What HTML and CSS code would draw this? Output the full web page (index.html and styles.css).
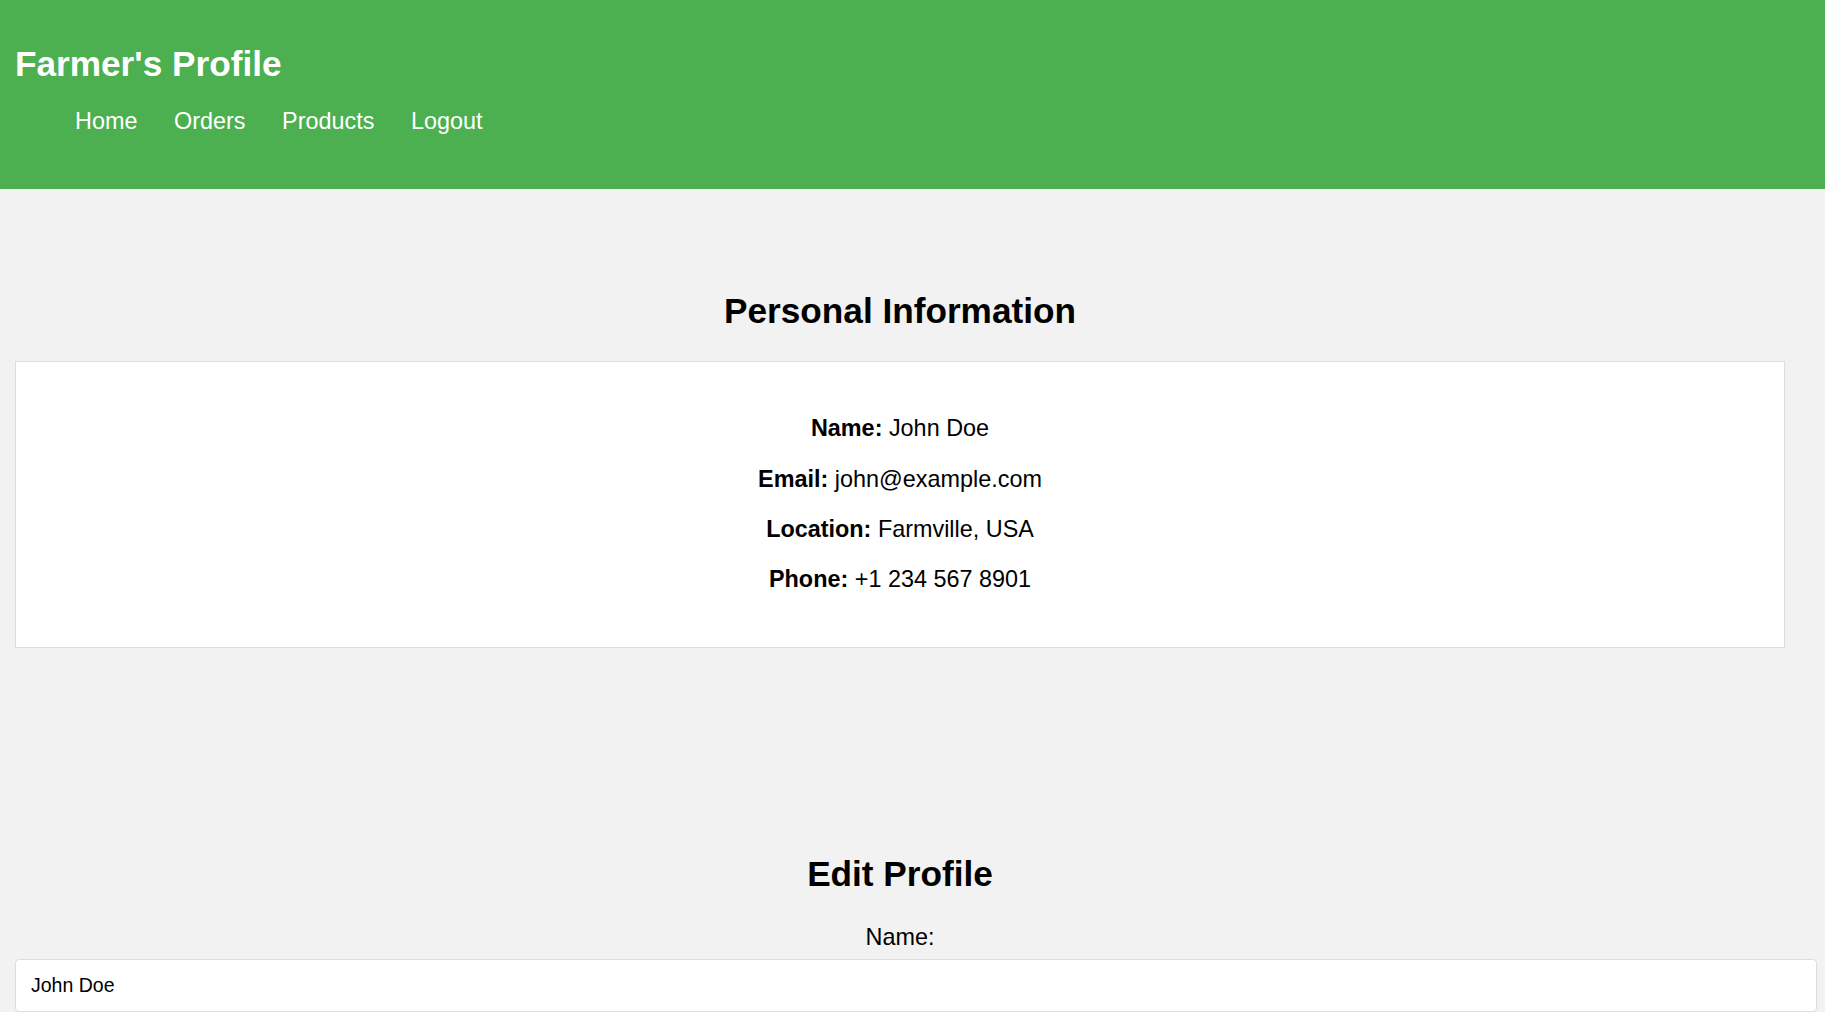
FILE: index.html
```html
<!DOCTYPE html>
<html lang="en">
<head>
<meta charset="utf-8">
<title>Farmer's Profile</title>
<link rel="stylesheet" href="styles.css">
</head>
<body>
<header class="site-header">
  <h1 class="site-title">Farmer's Profile</h1>
  <nav>
    <ul class="nav-list">
      <li><a class="nav-link" href="#">Home</a></li>
      <li><a class="nav-link" href="#">Orders</a></li>
      <li><a class="nav-link" href="#">Products</a></li>
      <li><a class="nav-link" href="#">Logout</a></li>
    </ul>
  </nav>
</header>
<main class="content">
  <section class="info-section">
    <h2 class="section-title">Personal Information</h2>
    <div class="info-card">
      <p class="info-line"><strong>Name:</strong> John Doe</p>
      <p class="info-line"><strong>Email:</strong> john@example.com</p>
      <p class="info-line"><strong>Location:</strong> Farmville, USA</p>
      <p class="info-line"><strong>Phone:</strong> +1 234 567 8901</p>
    </div>
  </section>
  <section class="edit-section">
    <h2 class="section-title">Edit Profile</h2>
    <form class="edit-form">
      <label class="field-label" for="name">Name:</label>
      <input class="field-input" type="text" id="name" value="John Doe">
      <label class="field-label" for="email">Email:</label>
      <input class="field-input" type="email" id="email" value="john@example.com">
      <label class="field-label" for="location">Location:</label>
      <input class="field-input" type="text" id="location" value="Farmville, USA">
      <label class="field-label" for="phone">Phone:</label>
      <input class="field-input" type="text" id="phone" value="+1 234 567 8901">
      <button class="save-button" type="submit">Update Profile</button>
    </form>
  </section>
</main>
</body>
</html>
```
FILE: styles.css
```css
html, body {
  margin: 0;
  padding: 0;
}

html::-webkit-scrollbar {
  width: 11px;
  height: 10px;
  background: #fafafa;
}

html::-webkit-scrollbar-track {
  background: #fafafa;
}

html::-webkit-scrollbar-thumb {
  background: #8a8a8a;
  border-radius: 5px;
  border: 1px solid #fafafa;
}

html::-webkit-scrollbar-corner {
  background: #fafafa;
}

body {
  background: #f2f2f2;
  color: #000;
  font-family: "Liberation Sans", Arial, sans-serif;
}

.site-header {
  background: #4caf50;
  color: #fff;
  padding: 44.2px 15px 53.4px;
}

.site-title {
  margin: 0;
  font-size: 35.2px;
  line-height: 40.5px;
  font-weight: bold;
}

.nav-list {
  list-style: none;
  margin: 23.6px 0 0;
  padding: 0 0 0 60px;
  display: flex;
  gap: 36.6px;
  font-size: 23.4px;
  line-height: 26.9px;
}

.nav-link {
  color: #fff;
  text-decoration: none;
}

.content {
  width: 1770px;
  padding: 102.9px 0 40px 15px;
}

.section-title {
  margin: 0 0 29px;
  font-size: 35.2px;
  line-height: 40.5px;
  text-align: center;
  font-weight: bold;
}

.info-card {
  background: #fff;
  border: 1px solid #ddd;
  padding: 30px;
  text-align: center;
  font-size: 23.4px;
  line-height: 26.9px;
}

.info-line {
  margin: 23.4px 0;
}

.edit-section {
  margin-top: 206.6px;
}

.edit-form {
  display: flex;
  flex-direction: column;
}

.field-label {
  display: block;
  text-align: center;
  font-size: 23.4px;
  line-height: 26.9px;
  margin-bottom: 8.2px;
}

.field-input {
  width: 100%;
  padding: 14px 15px;
  border: 1px solid #ddd;
  border-radius: 4px;
  background: #fff;
  font-family: "Liberation Sans", Arial, sans-serif;
  font-size: 19.5px;
  color: #000;
  margin: 0 0 20px;
}

.save-button {
  align-self: center;
  background: #4caf50;
  color: #fff;
  border: none;
  border-radius: 4px;
  padding: 14px 28px;
  font-family: "Liberation Sans", Arial, sans-serif;
  font-size: 19.5px;
}
```
